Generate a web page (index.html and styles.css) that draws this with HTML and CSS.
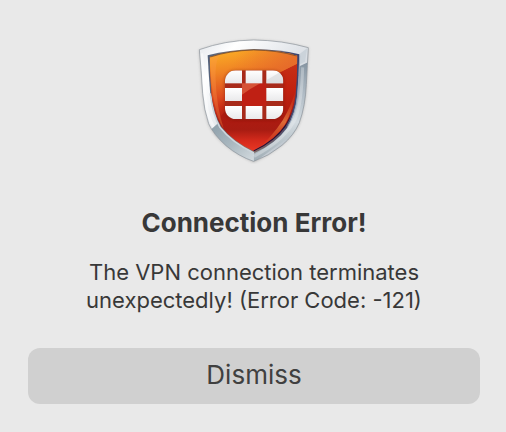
FILE: index.html
```
<!DOCTYPE html>
<html lang="en">
<head>
  <meta charset="UTF-8">
  <meta name="viewport" content="width=device-width, initial-scale=1">
  <title>Connection Error!</title>
  <link rel="stylesheet" href="styles.css">
</head>
<body>

  <main class="dialog">
    <svg class="dialog-icon" viewBox="0 18 384 384" aria-hidden="true">
      <defs>
        <linearGradient id="rim" x1="0" y1="0" x2="1" y2="1">
          <stop offset="0" stop-color="#dfe3e8"/>
          <stop offset="0.2" stop-color="#ffffff"/>
          <stop offset="0.5" stop-color="#dfe3e8"/>
          <stop offset="1" stop-color="#aab5be"/>
        </linearGradient>
        <linearGradient id="rimRight" x1="0" y1="0" x2="0" y2="1">
          <stop offset="0" stop-color="#8493a0"/>
          <stop offset="0.35" stop-color="#b4bfc8"/>
          <stop offset="0.6" stop-color="#d3dbe0"/>
          <stop offset="1" stop-color="#9eabb3"/>
        </linearGradient>
        <linearGradient id="rimLeft" x1="0" y1="0" x2="1" y2="1">
          <stop offset="0" stop-color="#8b9da8"/>
          <stop offset="0.5" stop-color="#a9b7bf"/>
          <stop offset="1" stop-color="#d5dce0"/>
        </linearGradient>
        <linearGradient id="bevel" x1="0" y1="0" x2="1" y2="0">
          <stop offset="0" stop-color="#52627c"/>
          <stop offset="0.4" stop-color="#8b7465"/>
          <stop offset="1" stop-color="#3a4370"/>
        </linearGradient>
        <linearGradient id="red" x1="0" y1="0" x2="0" y2="1">
          <stop offset="0" stop-color="#c73a1c"/>
          <stop offset="0.4" stop-color="#c2210f"/>
          <stop offset="0.66" stop-color="#ad1a10"/>
          <stop offset="0.78" stop-color="#a81c12"/>
          <stop offset="0.88" stop-color="#d42a1c"/>
          <stop offset="1" stop-color="#ee3a26"/>
        </linearGradient>
        <linearGradient id="gloss" gradientUnits="userSpaceOnUse" x1="100" y1="60" x2="135" y2="270">
          <stop offset="0" stop-color="#fbad25"/>
          <stop offset="0.3" stop-color="#f08424"/>
          <stop offset="0.65" stop-color="#dd4a1e"/>
          <stop offset="1" stop-color="#cf2a1a" stop-opacity="0"/>
        </linearGradient>
        <linearGradient id="glossFade" gradientUnits="userSpaceOnUse" x1="140" y1="60" x2="300" y2="100">
          <stop offset="0" stop-color="#e76c2c" stop-opacity="0"/>
          <stop offset="1" stop-color="#e4682c" stop-opacity="0.75"/>
        </linearGradient>
        <linearGradient id="edgeGlow" x1="0" y1="0" x2="0" y2="1">
          <stop offset="0" stop-color="#d23a1c" stop-opacity="0"/>
          <stop offset="0.6" stop-color="#dd6a36"/>
          <stop offset="1" stop-color="#e04a26" stop-opacity="0.2"/>
        </linearGradient>
        <linearGradient id="tile" x1="0" y1="0" x2="0" y2="1">
          <stop offset="0" stop-color="#ffffff"/>
          <stop offset="1" stop-color="#e9e9eb"/>
        </linearGradient>
        <clipPath id="outer">
          <path d="M28 59 Q106 31 191 30 Q277 31 355 53 Q352 105 349 163 Q346 228 328 278 Q312 316 276 346 Q236 379 191 394 Q146 379 108 347 Q70 313 56 281 Q42 240 38 190 Q34 120 28 59Z"/>
        </clipPath>
        <clipPath id="inner">
          <path d="M59 81 Q118 62 191 60 Q263 61 322 77 Q322 135 317 194 Q311 250 286 290 Q255 334 192 364 Q129 334 94 290 Q72 253 65 194 Q60 137 59 81Z"/>
        </clipPath>
        <clipPath id="tiles">
          <rect x="105" y="121" width="175" height="146" rx="32"/>
        </clipPath>
        <filter id="soft" x="-20%" y="-20%" width="140%" height="140%">
          <feGaussianBlur stdDeviation="4"/>
        </filter>
      </defs>

      <!-- drop shadow -->
      <path d="M28 61 Q106 33 191 31 Q277 33 355 55 Q352 105 349 165 Q346 230 328 280 Q300 345 191 397 Q82 345 56 283 Q42 240 38 190Z" fill="#777" opacity="0.5" filter="url(#soft)"/>

      <!-- silver rim -->
      <g clip-path="url(#outer)">
        <rect x="20" y="20" width="350" height="380" fill="url(#rim)"/>
        <path d="M322 112 L360 94 L356 280 L191 398 L191 362 Q260 330 286 290 Q316 250 322 112Z" fill="url(#rimRight)"/>
        <path d="M35 70 Q44 190 52 245 Q62 281 81 304" fill="none" stroke="#ffffff" stroke-width="9" opacity="0.45"/>
        <path d="M57 304 L84 280 Q120 341 192 363 L191 398 Q100 370 57 304Z" fill="url(#rimLeft)"/>
        <path d="M322 77 L352 54 L345 95 L324 106Z" fill="#cbd3da"/>
        <path d="M338 112 Q335 216 318 262 Q290 326 192 379" fill="none" stroke="#eef2f3" stroke-width="9" opacity="0.35"/>
      </g>
      <path d="M28 59 Q106 31 191 30 Q277 31 355 53 Q352 105 349 163 Q346 228 328 278 Q312 316 276 346 Q236 379 191 394 Q146 379 108 347 Q70 313 56 281 Q42 240 38 190 Q34 120 28 59Z" fill="none" stroke="#8b929a" stroke-width="2"/>

      <!-- dark bevel inside the rim -->
      <path d="M53 76 Q118 59 191 57 Q267 58 328 73 Q327 135 322 197 Q316 254 291 294 Q258 340 192 370 Q126 338 90 292 Q68 254 61 194 Q56 137 53 76Z" fill="url(#bevel)"/>
      <path d="M61 190 Q68 254 90 292 Q126 338 192 369" fill="none" stroke="#cdd5dc" stroke-width="5"/>
      <path d="M329 77 Q328 137 323 195 Q317 252 293 290" fill="none" stroke="#9aa9bd" stroke-width="3"/>

      <!-- red field -->
      <g clip-path="url(#inner)">
        <rect x="50" y="50" width="280" height="320" fill="url(#red)"/>
        <path d="M50 50 H330 V97 Q230 146 164 189 Q104 230 80 282 L50 282Z" fill="url(#gloss)"/>
        <path d="M130 50 H330 V97 Q276 122 230 148 L130 148Z" fill="url(#glossFade)"/>
        <path d="M60 84 Q70 70 92 72 Q74 92 77 150 Q79 225 101 296 Q66 250 60 84Z" fill="#ff9c50" opacity="0.3"/>
        <path d="M320 170 Q310 240 284 286 Q256 325 215 347 Q270 292 292 245 Q308 214 320 170Z" fill="url(#edgeGlow)"/>
        <path d="M318 222 Q304 284 252 328 Q224 351 192 365" fill="none" stroke="#14143f" stroke-width="8"/>
      </g>
      <path d="M61 81 Q118 62 191 60 Q263 61 320 78" fill="none" stroke="#6b4a2c" stroke-width="3" opacity="0.7"/>

      <!-- tile emblem -->
      <rect x="103" y="121" width="179" height="150" rx="32" fill="#6e130b" opacity="0.4" filter="url(#soft)"/>
      <g clip-path="url(#tiles)">
        <rect x="105" y="121" width="175" height="146" fill="#a82a1a"/>
        <path d="M156 160 H229 V228 H156Z" fill="#bf2014"/>
        <path d="M156 160 H211 Q181 176 156 194Z" fill="#d65236"/>
        <g fill="url(#tile)">
          <rect x="105" y="121" width="51" height="39"/>
          <rect x="167" y="121" width="50" height="39"/>
          <rect x="229" y="121" width="51" height="39"/>
          <rect x="105" y="174" width="51" height="39"/>
          <rect x="229" y="174" width="51" height="39"/>
          <rect x="105" y="228" width="51" height="39"/>
          <rect x="167" y="228" width="50" height="39"/>
          <rect x="229" y="228" width="51" height="39"/>
        </g>
        <path d="M280 121 L229 151 V160 H280Z" fill="#cfd1d3" opacity="0.5"/>
      </g>
    </svg>

    <h1 class="dialog-title">Connection Error!</h1>
    <p class="dialog-text">The VPN connection terminates unexpectedly! (Error Code: -121)</p>

    <button type="button" class="dismiss">Dismiss</button>
  </main>

</body>
</html>
```
FILE: styles.css
```
* {
  box-sizing: border-box;
}

body {
  margin: 0;
  background: #e9e9e9;
  color: #383838;
  font-family: Inter, "Liberation Sans", sans-serif;
}

.dialog {
  display: flex;
  flex-direction: column;
  align-items: center;
  padding: 36px 26px 28px 28px;
  text-align: center;
}

.dialog-icon {
  width: 128px;
  height: 128px;
}

.dialog-title {
  margin: 44px 0 20px;
  font-size: 26px;
  line-height: 30px;
  font-weight: 700;
}

.dialog-text {
  max-width: 360px;
  margin: 0 0 34px;
  font-size: 22px;
  line-height: 28px;
}

.dismiss {
  width: 100%;
  padding: 12px 12px 14px;
  border: none;
  border-radius: 12px;
  background: #d0d0d0;
  color: #404040;
  font-family: inherit;
  font-size: 26px;
  line-height: 30px;
  cursor: pointer;
}

.dismiss:hover {
  background: #c6c6c6;
}
```
